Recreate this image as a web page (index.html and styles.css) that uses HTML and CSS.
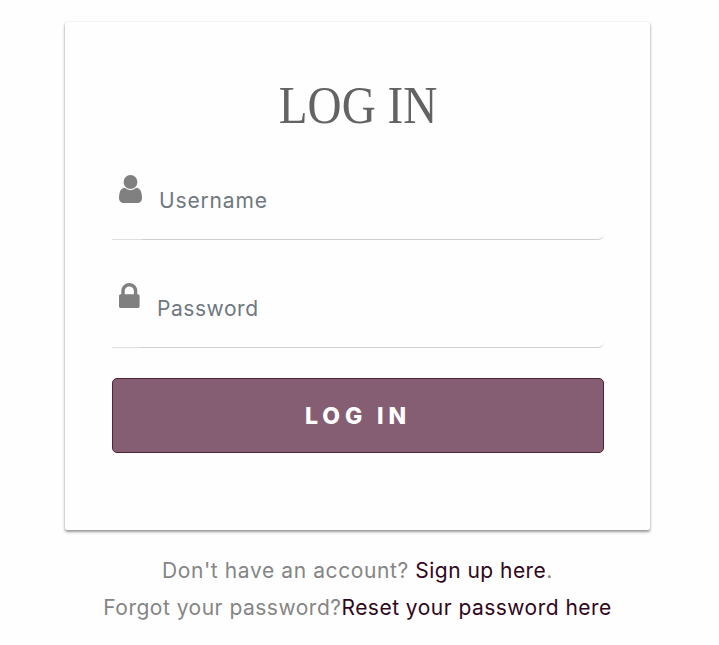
FILE: index.html
```html
<!DOCTYPE html>
<html lang="en">
<head>
<meta charset="utf-8">
<title>Log in</title>
<link rel="stylesheet" href="styles.css">
</head>
<body>
<main class="card">
  <h1 class="title"><span class="title-text">LOG IN</span></h1>
  <form class="form">
    <label class="field field-user">
      <span class="addon"><svg class="icon" width="23" height="28" viewBox="0 -1408 1280 1536" preserveAspectRatio="none"><path transform="scale(1,-1)" d="M1280 137q0-109-62.500-187t-150.500-78h-854q-88 0-150.500 78t-62.500 187q0 85 8.500 160.500t31.500 152 58.500 131 94 89 134.500 34.500q131-128 313-128t313 128q76 0 134.500-34.500t94-89 58.500-131 31.500-152 8.500-160.500zM1024 1024q0-159-112.500-271.500t-271.500-112.500-271.500 112.500-112.500 271.500 112.500 271.500 271.500 112.500 271.500-112.500 112.500-271.500z"/></svg></span>
      <span class="input"><span class="placeholder username">Username</span></span>
    </label>
    <label class="field field-password">
      <span class="addon"><svg class="icon" width="20.600" height="25" viewBox="0 -1408 1152 1408" preserveAspectRatio="none"><path transform="scale(1,-1)" d="M320 768h512v192q0 106-75 181t-181 75-181-75-75-181v-192zm832-96v-576q0-40-28-68t-68-28h-960q-40 0-68 28t-28 68v576q0 40 28 68t68 28h32v192q0 184 132 316t316 132 316-132 132-316v-192h32q40 0 68-28t28-68z"/></svg></span>
      <span class="input"><span class="placeholder password">Password</span></span>
    </label>
    <button class="submit" type="button">LOG IN</button>
  </form>
</main>
<footer class="links">
  <p class="line signup">Don't have an account? <a href="#">Sign up here</a>.</p>
  <p class="line reset">Forgot your password?<a href="#">Reset your password here</a></p>
</footer>
</body>
</html>
```
FILE: styles.css
```css
* { box-sizing: border-box; }
body {
  margin: 0;
  padding-top: 22px;
  background: #fefefe;
  color: #858585;
  font: 400 21px/37px Inter, "Open Sans", sans-serif;
}
.card {
  width: 585px;
  height: 508px;
  margin-left: 65px;
  padding: 52px 46px 0 47px;
  background: #fefefe;
  border-radius: 2px;
  box-shadow: 0 2px 3px rgba(0, 0, 0, .4), 0 0 2px rgba(0, 0, 0, .12);
}
.title {
  height: 63px;
  margin: 0;
  color: #636363;
  font: 400 53px/63px "Liberation Serif", serif;
  text-align: center;
  white-space: nowrap;
}
.title-text { display: inline-block; transform: scaleX(.89); }
.form { display: flex; flex-direction: column; }
.field { display: flex; height: 79px; }
.field-user { margin-top: 24px; }
.field-password { margin-top: 29px; }
.addon {
  flex: none;
  width: 30px;
  padding: 14px 0 0 7px;
  border-bottom: 1px solid #dedede;
}
.field-password .addon { width: 27px; }
.icon { display: block; fill: #808080; }
.input {
  flex: 1;
  padding: 21px 0 0 17px;
  border-bottom: 1px solid #ced0d4;
  border-radius: 0 0 6px 0;
}
.field-password .input { padding-left: 18px; }
.placeholder { display: block; color: #6f7880; white-space: nowrap; }
.username { letter-spacing: .85px; }
.password { letter-spacing: .55px; }
.submit {
  height: 75px;
  margin-top: 30px;
  padding: 1px 0 0 0;
  background: #855e73;
  border: 1px solid #502535;
  border-radius: 5px;
  color: #fff;
  font: 800 23px/72px Inter, "Open Sans", sans-serif;
  letter-spacing: 4.9px;
}
.links { margin: 22px 4px 0 0; text-align: center; }
.line { margin: 0; white-space: nowrap; letter-spacing: .5px; }
.signup { letter-spacing: .6px; }
.links a { color: #300720; text-decoration: none; letter-spacing: .47px; }
```
